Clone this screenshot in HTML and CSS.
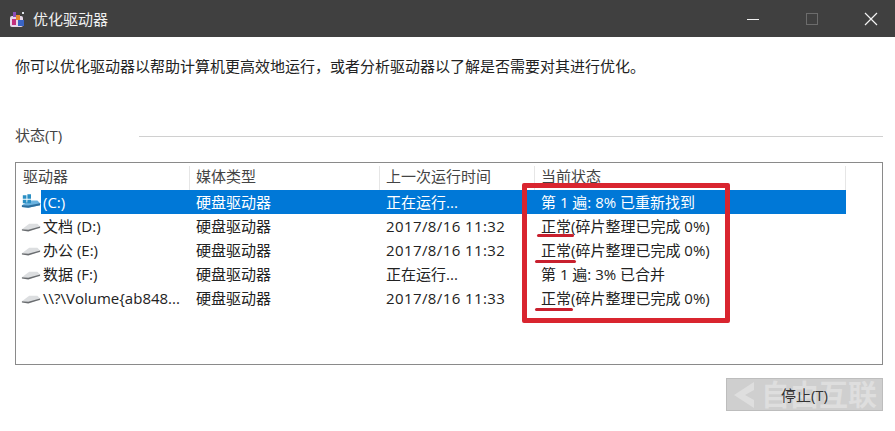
FILE: index.html
```html
<!DOCTYPE html>
<html lang="zh-CN">
<head>
  <meta charset="UTF-8" />
  <title>优化驱动器</title>
  <link rel="stylesheet" href="styles.css">
</head>
<body>

  <svg class="defs" width="0" height="0">
    <symbol id="drive" viewBox="0 0 22 14">
      <path d="M1 10 L9 4 H18 L21 7 V9 L8 11 Z" fill="#dcdee0"/>
      <path d="M1 10 L8 10.5 L21 7 V8.5 L8 12.5 L1 11.5 Z" fill="#6a6d70"/>
    </symbol>
    <symbol id="driveSys" viewBox="0 0 22 18">
      <path d="M1 13 L9 8 H18 L21 11 V13 L8 16 L1 15 Z" fill="#6bb3e0"/>
      <path d="M1 13 L8 13.5 L21 11 V13 L8 16 L1 15 Z" fill="#2e6f9e"/>
      <path d="M2 2 H6 V6 H2 Z M7 1 H11 V6 H7 Z M2 7 H6 V11 H2 Z M7 7 H11 V11 H7 Z" fill="#2a8fc4"/>
    </symbol>
  </svg>

  <div class="titlebar">
    <svg class="app-icon" width="18" height="18" viewBox="0 0 18 18">
      <rect x="1" y="6" width="13" height="11" rx="2" fill="#e5d7ea"/>
      <rect x="3" y="9" width="4" height="6" fill="#c22f7d"/>
      <rect x="7" y="5" width="4" height="5" fill="#e58a2e"/>
      <rect x="9" y="10" width="6" height="6" fill="#3a64c4"/>
      <rect x="4" y="2" width="3" height="5" fill="#8a4fb8"/>
      <rect x="13" y="2" width="2" height="2" fill="#dfe4ea"/>
    </svg>
    <span class="title">优化驱动器</span>
    <div class="win-btns">
      <svg width="14" height="14" viewBox="0 0 14 14"><path d="M1 7.5 H13" stroke="#f2f2f2" stroke-width="1"/></svg>
      <svg width="14" height="14" viewBox="0 0 14 14"><rect x="1.5" y="1.5" width="11" height="11" fill="none" stroke="#6c6c6c"/></svg>
      <svg width="14" height="14" viewBox="0 0 14 14"><path d="M1 1 L13 13 M13 1 L1 13" stroke="#f2f2f2" stroke-width="1.2"/></svg>
    </div>
  </div>

  <div class="content">
    <p class="intro">你可以优化驱动器以帮助计算机更高效地运行，或者分析驱动器以了解是否需要对其进行优化。</p>

    <div class="status-head">
      <span>状态(T)</span>
      <div class="rule"></div>
    </div>

    <div class="listbox">
      <div class="row head">
        <div class="c1">驱动器</div>
        <div class="c2">媒体类型</div>
        <div class="c3">上一次运行时间</div>
        <div class="c4">当前状态</div>
      </div>
      <div class="row selected">
        <svg class="drive-icon sys"><use href="#driveSys"/></svg>
        <div class="c1">(C:)</div>
        <div class="c2">硬盘驱动器</div>
        <div class="c3">正在运行...</div>
        <div class="c4">第 1 遍: 8% 已重新找到</div>
      </div>
      <div class="row">
        <svg class="drive-icon"><use href="#drive"/></svg>
        <div class="c1">文档 (D:)</div>
        <div class="c2">硬盘驱动器</div>
        <div class="c3 date">2017/8/16 11:32</div>
        <div class="c4">正常(碎片整理已完成 0%)</div>
      </div>
      <div class="row">
        <svg class="drive-icon"><use href="#drive"/></svg>
        <div class="c1">办公 (E:)</div>
        <div class="c2">硬盘驱动器</div>
        <div class="c3 date">2017/8/16 11:32</div>
        <div class="c4">正常(碎片整理已完成 0%)</div>
      </div>
      <div class="row">
        <svg class="drive-icon"><use href="#drive"/></svg>
        <div class="c1">数据 (F:)</div>
        <div class="c2">硬盘驱动器</div>
        <div class="c3">正在运行...</div>
        <div class="c4">第 1 遍: 3% 已合并</div>
      </div>
      <div class="row">
        <svg class="drive-icon"><use href="#drive"/></svg>
        <div class="c1">\\?\Volume{ab848...</div>
        <div class="c2">硬盘驱动器</div>
        <div class="c3 date">2017/8/16 11:33</div>
        <div class="c4">正常(碎片整理已完成 0%)</div>
      </div>

      <!-- red marks drawn on top of the list -->
      <div class="mark-box"></div>
      <div class="mark-line line1"></div>
      <div class="mark-line line2"></div>
      <div class="mark-line line3"></div>
    </div>

    <div class="actions">
      <button type="button" class="stop">
        <svg class="wm-logo" width="26" height="30" viewBox="0 0 26 30"><path d="M24 2 L4 15 L24 28 L24 20 L15 15 L24 10 Z" fill="#dedede"/></svg>
        <span class="wm-text">自由互联</span>
        <span class="stop-label">停止(T)</span>
      </button>
    </div>
  </div>

</body>
</html>
```

FILE: styles.css
```css
body {
  margin: 0;
  background-color: #ffffff;
  font-family: "Open Sans", "Noto Sans CJK SC", sans-serif;
  font-size: 15px;
  color: #222;
  overflow: hidden;
}

.defs {
  position: absolute;
}

.titlebar {
  height: 37px;
  background-color: #404040;
  color: #f0f0f0;
  display: flex;
  align-items: center;
  padding-left: 9px;
}

.app-icon {
  margin-right: 6px;
}

.title {
  font-size: 15px;
}

.win-btns {
  margin-left: auto;
  width: 132px;
  padding-right: 17px;
  display: flex;
  justify-content: space-between;
  align-items: center;
}

.win-btns svg {
  width: 14px;
  height: 14px;
}

.content {
  padding: 0 12px 0 15px;
}

.intro {
  margin: 0;
  padding-top: 18px;
  line-height: 22px;
  height: 22px;
}

.status-head {
  margin-top: 46px;
  display: flex;
  align-items: center;
  height: 22px;
  color: #444;
}

.rule {
  margin: 4px 0 0 77px;
  flex: 1;
  height: 1px;
  background-color: #d0d0d0;
}

.listbox {
  position: relative;
  margin-top: 17px;
  height: 198px;
  border: 1px solid #8a8a8a;
  padding-top: 3px;
}

.row {
  position: relative;
  display: flex;
  height: 24px;
  line-height: 24px;
  white-space: nowrap;
  padding-left: 4px;
}

.row > div {
  padding-left: 6px;
  box-sizing: border-box;
}

.c1 { width: 170px; padding-left: 23px !important; }
.c2 { width: 190px; }
.c3 { width: 155px; }
.c4 { width: 311px; }

.date {
  letter-spacing: 0.4px;
}

.head {
  color: #444;
  line-height: 20px;
}

.head > div {
  border-right: 1px solid #e6e6e6;
}

.head .c1 {
  padding-left: 3px !important;
}

.selected {
  color: #ffffff;
}

.selected::before {
  content: "";
  position: absolute;
  left: 25px;
  top: 0;
  width: 805px;
  height: 24px;
  background-color: #0078d7;
}

.selected > div {
  position: relative;
}

.drive-icon {
  position: absolute;
  left: 5px;
  top: 6px;
  width: 20px;
  height: 13px;
}

.drive-icon.sys {
  top: 3px;
  height: 17px;
}

.mark-box {
  position: absolute;
  left: 506px;
  top: 20px;
  width: 198px;
  height: 130px;
  border: 5px solid #d9252f;
  border-radius: 2px;
}

.mark-line {
  position: absolute;
  height: 3px;
  border-radius: 2px;
  background-color: #c8202e;
}

.line1 { left: 521px; top: 71px; width: 37px; }
.line2 { left: 519px; top: 97px; width: 41px; }
.line3 { left: 519px; top: 145px; width: 38px; }

.actions {
  display: flex;
  justify-content: flex-end;
  margin-top: 13px;
}

.stop {
  position: relative;
  width: 157px;
  height: 33px;
  padding: 0;
  background-color: #cfcfcf;
  border: 1px solid #bdbdbd;
  font-family: inherit;
  font-size: 15px;
  color: #333;
}

.wm-logo {
  position: absolute;
  left: 3px;
  top: 1px;
}

.wm-text {
  position: absolute;
  left: 34px;
  top: 0;
  font-size: 29px;
  line-height: 31px;
  font-weight: 700;
  color: #dedede;
  white-space: nowrap;
}

.stop-label {
  position: relative;
}
```
